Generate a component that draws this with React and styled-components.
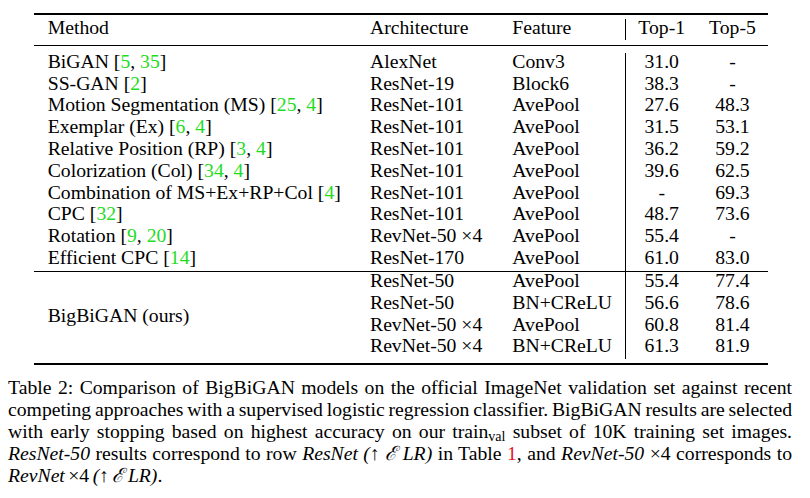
import React from 'react';
import styled, { createGlobalStyle } from 'styled-components';

const Global = createGlobalStyle`
  html, body { margin: 0; padding: 0; background: #fff; }
  body { font-family: "Liberation Serif", "DejaVu Serif", serif; color: #000; }
`;

const Page = styled.div`
  width: 810px;
  height: 498px;
  padding-top: 12.5px;
  box-sizing: border-box;
  overflow: hidden;
  font-family: "Liberation Serif", "DejaVu Serif", serif;
`;

const Table = styled.div`
  margin-left: 34px;
  width: 734px;
  font-size: 19.7px;
`;

const Rule = styled.div`
  height: ${p => (p.$heavy ? 2 : 1)}px;
  background: #000;
`;

const Space = styled.div`
  height: ${p => p.$h}px;
`;

const Grid = styled.div`
  display: grid;
  grid-template-columns: 336px 142.3px 113.2px 71.5px 71px;
  grid-auto-rows: 21.8px;
  line-height: 17px;
`;

const Cell = styled.div`
  grid-column: ${p => p.$col || 'auto'};
  padding-left: ${p => (p.$first ? 13.7 : 0)}px;
  text-align: ${p => (p.$num ? 'center' : 'left')};
  border-left: ${p => (p.$divider ? '1px solid #000' : '0')};
  white-space: nowrap;
`;

const SpanCell = styled(Cell)`
  grid-row: span 4;
  align-self: center;
`;

const G = styled.span`
  color: #1fdc1f;
`;

const R = styled.span`
  color: #e8142a;
`;

const Caption = styled.div`
  margin: 11px 0 0 8px;
  width: 784px;
  font-size: 19.7px;
  line-height: 22px;
  word-spacing: -1.5px;
`;

const Line = styled.div`
  text-align: justify;
  text-align-last: ${p => (p.$last ? 'left' : 'justify')};
`;

const I = styled.i`
  font-style: italic;
`;

const Sub = styled.span`
  font-size: 14px;
  vertical-align: -3px;
  line-height: 0;
`;

const rowsA = [
  { m: <>BiGAN [<G>5</G>, <G>35</G>]</>, a: 'AlexNet', f: 'Conv3', t1: '31.0', t5: '-' },
  { m: <>SS-GAN [<G>2</G>]</>, a: 'ResNet-19', f: 'Block6', t1: '38.3', t5: '-' },
  { m: <>Motion Segmentation (MS) [<G>25</G>, <G>4</G>]</>, a: 'ResNet-101', f: 'AvePool', t1: '27.6', t5: '48.3' },
  { m: <>Exemplar (Ex) [<G>6</G>, <G>4</G>]</>, a: 'ResNet-101', f: 'AvePool', t1: '31.5', t5: '53.1' },
  { m: <>Relative Position (RP) [<G>3</G>, <G>4</G>]</>, a: 'ResNet-101', f: 'AvePool', t1: '36.2', t5: '59.2' },
  { m: <>Colorization (Col) [<G>34</G>, <G>4</G>]</>, a: 'ResNet-101', f: 'AvePool', t1: '39.6', t5: '62.5' },
  { m: <>Combination of MS+Ex+RP+Col [<G>4</G>]</>, a: 'ResNet-101', f: 'AvePool', t1: '-', t5: '69.3' },
  { m: <>CPC [<G>32</G>]</>, a: 'ResNet-101', f: 'AvePool', t1: '48.7', t5: '73.6' },
  { m: <>Rotation [<G>9</G>, <G>20</G>]</>, a: 'RevNet-50 ×4', f: 'AvePool', t1: '55.4', t5: '-' },
  { m: <>Efficient CPC [<G>14</G>]</>, a: 'ResNet-170', f: 'AvePool', t1: '61.0', t5: '83.0' },
];

const rowsB = [
  { a: 'ResNet-50', f: 'AvePool', t1: '55.4', t5: '77.4' },
  { a: 'ResNet-50', f: 'BN+CReLU', t1: '56.6', t5: '78.6' },
  { a: 'RevNet-50 ×4', f: 'AvePool', t1: '60.8', t5: '81.4' },
  { a: 'RevNet-50 ×4', f: 'BN+CReLU', t1: '61.3', t5: '81.9' },
];

export default function App() {
  return (
    <Page>
      <Global />
      <Table>
        <Rule $heavy />
        <Space $h={4} />
        <Grid>
          <Cell $first>Method</Cell>
          <Cell>Architecture</Cell>
          <Cell>Feature</Cell>
          <Cell $num $divider>Top-1</Cell>
          <Cell $num>Top-5</Cell>
        </Grid>
        <Space $h={4.7} />
        <Rule />
        <Space $h={6.8} />
        <Grid>
          {rowsA.map((r, i) => (
            <React.Fragment key={i}>
              <Cell $first>{r.m}</Cell>
              <Cell>{r.a}</Cell>
              <Cell>{r.f}</Cell>
              <Cell $num $divider>{r.t1}</Cell>
              <Cell $num>{r.t5}</Cell>
            </React.Fragment>
          ))}
        </Grid>
        <Space $h={0.2} />
        <Rule />
        <Grid>
          <SpanCell $first>BigBiGAN (ours)</SpanCell>
          {rowsB.map((r, i) => (
            <React.Fragment key={i}>
              <Cell $col={2}>{r.a}</Cell>
              <Cell>{r.f}</Cell>
              <Cell $num $divider>{r.t1}</Cell>
              <Cell $num>{r.t5}</Cell>
            </React.Fragment>
          ))}
        </Grid>
        <Space $h={4} />
        <Rule $heavy />
      </Table>
      <Caption>
        <Line>Table 2: Comparison of BigBiGAN models on the official ImageNet validation set against recent</Line>
        <Line>competing approaches with a supervised logistic regression classifier. BigBiGAN results are selected</Line>
        <Line>with early stopping based on highest accuracy on our train<Sub>val</Sub> subset of 10K training set images.</Line>
        <Line>
          <I>ResNet-50</I> results correspond to row <I>ResNet (↑ ℰ LR)</I> in Table <R>1</R>, and <I>RevNet-50</I> ×4 corresponds to
        </Line>
        <Line $last>
          <I>RevNet</I> ×4 <I>(↑ ℰ LR)</I>.
        </Line>
      </Caption>
    </Page>
  );
}
